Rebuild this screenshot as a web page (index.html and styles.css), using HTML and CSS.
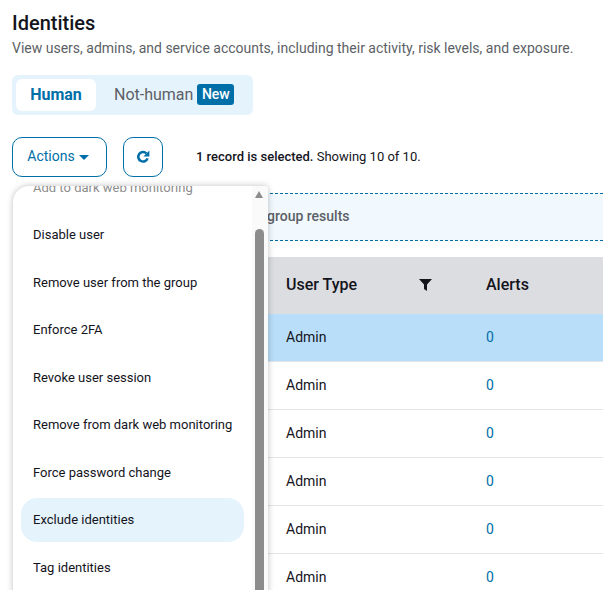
FILE: index.html
```html
<!DOCTYPE html>
<html lang="en">
<head>
  <meta charset="UTF-8">
  <title>Identities</title>
  <link rel="stylesheet" href="styles.css">
</head>
<body>
  <h1 class="title">Identities</h1>
  <p class="subtitle">View users, admins, and service accounts, including their activity, risk levels, and exposure.</p>

  <div class="tabs">
    <div class="tab active">Human</div>
    <div class="tab">Not-human <span class="badge">New</span></div>
  </div>

  <div class="toolbar">
    <button class="btn btn-actions">Actions <span class="caret"></span></button>
    <button class="btn btn-refresh" aria-label="Refresh">
      <svg width="14" height="14" viewBox="0 0 14 14" fill="none">
        <path d="M11.6 8.4A4.8 4.8 0 1 1 10.4 3.3" stroke="#006fa8" stroke-width="2.5"/>
        <path d="M13.4 .6v6H7.4z" fill="#006fa8"/>
      </svg>
    </button>
    <div class="status"><b>1 record is selected.</b> Showing 10 of 10.</div>
  </div>

  <div class="content">
    <div class="banner">group results</div>
    <table class="grid">
      <thead>
        <tr>
          <th class="col-spacer"></th>
          <th class="col-type">
            <div class="th-inner">User Type
              <svg class="filter" width="13" height="13" viewBox="0 0 13 13"><path d="M0 1h13L8 6.5V13L5 11V6.5z" fill="#14141c"/></svg>
            </div>
          </th>
          <th class="col-alerts">Alerts</th>
        </tr>
      </thead>
      <tbody>
        <tr class="selected"><td></td><td>Admin</td><td class="link">0</td></tr>
        <tr><td></td><td>Admin</td><td class="link">0</td></tr>
        <tr><td></td><td>Admin</td><td class="link">0</td></tr>
        <tr><td></td><td>Admin</td><td class="link">0</td></tr>
        <tr><td></td><td>Admin</td><td class="link">0</td></tr>
        <tr><td></td><td>Admin</td><td class="link">0</td></tr>
      </tbody>
    </table>

    <div class="menu">
      <ul class="menu-list">
        <li class="disabled">Add to dark web monitoring</li>
        <li>Disable user</li>
        <li>Remove user from the group</li>
        <li>Enforce 2FA</li>
        <li>Revoke user session</li>
        <li>Remove from dark web monitoring</li>
        <li>Force password change</li>
        <li class="hover">Exclude identities</li>
        <li>Tag identities</li>
      </ul>
      <div class="scrollbar">
        <div class="scroll-arrow"></div>
        <div class="scroll-thumb"></div>
      </div>
    </div>
  </div>
</body>
</html>
```

FILE: styles.css
```css
html, body {
  height: 590px;
  overflow: hidden;
}
body {
  margin: 0;
  padding: 11px 0 0 12px;
  box-sizing: border-box;
  background-color: #fff;
  color: #14141c;
  font-family: Roboto, "Liberation Sans", sans-serif;
  font-size: 14px;
}
.title {
  margin: 0;
  font-size: 20px;
  line-height: 24px;
  font-weight: 500;
}
.subtitle {
  margin: 3px 0 0;
  font-size: 14px;
  line-height: 20px;
  color: #5c5f66;
}
.tabs {
  display: inline-flex;
  align-items: center;
  margin-top: 17px;
  padding: 4px;
  background-color: #e5f3fc;
  border-radius: 6px;
}
.tab {
  display: flex;
  align-items: center;
  box-sizing: border-box;
  height: 32px;
  padding: 0 15px 2px 18px;
  font-size: 16px;
  color: #5c5f66;
}
.tab .badge {
  margin-left: 4px;
}
.tab.active {
  width: 80px;
  justify-content: center;
  padding: 0 0 2px;
  background-color: #fff;
  border-radius: 6px;
  color: #006fa8;
  font-weight: 700;
}
.badge {
  padding: 2px 4.5px;
  background-color: #006fa8;
  border-radius: 3px;
  color: #fff;
  font-size: 14px;
  line-height: 17px;
  font-weight: 500;
}
.toolbar {
  display: flex;
  align-items: center;
  margin-top: 22px;
  height: 40px;
}
.btn {
  display: flex;
  align-items: center;
  justify-content: center;
  box-sizing: border-box;
  height: 40px;
  background-color: #fff;
  border: 1px solid #006fa8;
  border-radius: 10px;
  color: #006fa8;
  font-family: inherit;
  font-size: 14px;
  padding: 0;
}
.btn-actions {
  width: 95px;
  padding: 0 3px 2px 0;
}
.caret {
  margin: 2px 0 0 4px;
  border-left: 5px solid transparent;
  border-right: 5px solid transparent;
  border-top: 5px solid #006fa8;
}
.btn-refresh {
  width: 40px;
  margin-left: 16px;
}
.status {
  margin-left: 33px;
  padding-bottom: 2px;
  font-size: 13px;
}
.status b {
  font-weight: 500;
}
.content {
  position: relative;
  margin-top: 16px;
}
.banner {
  height: 46px;
  margin-left: 8px;
  padding-left: 247px;
  background-color: #f1f9fe;
  border-top: 1px dashed #006fa8;
  border-bottom: 1px dashed #006fa8;
  color: #5c5f66;
  font-size: 14px;
  font-weight: 500;
  line-height: 44px;
}
.grid {
  width: 589px;
  margin: 16px 0 0 2px;
  border-collapse: collapse;
  table-layout: fixed;
}
.grid th {
  height: 55px;
  padding: 0 0 2px;
  background-color: #dcdde0;
  font-size: 16px;
  font-weight: 500;
  text-align: left;
}
.grid td {
  height: 45px;
  padding: 0 0 2px;
  border-bottom: 1px solid #e4e5e7;
}
.col-spacer {
  width: 272px;
}
.col-type {
  width: 200px;
}
.th-inner {
  display: flex;
  align-items: center;
  justify-content: space-between;
  width: 146px;
}
.selected td {
  background-color: #b9def9;
}
.link {
  color: #006fa8;
}
.menu {
  position: absolute;
  top: -7px;
  left: 1px;
  width: 255px;
  height: 420px;
  overflow: hidden;
  background-color: #fff;
  border-radius: 16px 4px 0 0;
  box-shadow: 0 0 6px rgba(0, 0, 0, 0.25);
}
.menu-list {
  list-style: none;
  margin: -21px 0 0;
  padding: 0 24px 0 8px;
}
.menu-list li {
  display: flex;
  align-items: center;
  height: 44px;
  margin-bottom: 3.5px;
  padding-left: 12px;
  border-radius: 16px;
  font-size: 13px;
}
.menu-list .disabled {
  color: #8c8c8c;
}
.menu-list .hover {
  background-color: #e5f3fc;
}
.scrollbar {
  position: absolute;
  top: 0;
  right: 0;
  width: 16px;
  height: 100%;
  background-color: #fafafa;
}
.scroll-arrow {
  position: absolute;
  top: 5px;
  left: 3px;
  border-left: 4.5px solid transparent;
  border-right: 4.5px solid transparent;
  border-bottom: 7px solid #8c8c8c;
}
.scroll-thumb {
  position: absolute;
  top: 43px;
  bottom: 0;
  left: 3px;
  width: 9px;
  background-color: #8c8c8c;
  border-radius: 5px 5px 0 0;
}
```
